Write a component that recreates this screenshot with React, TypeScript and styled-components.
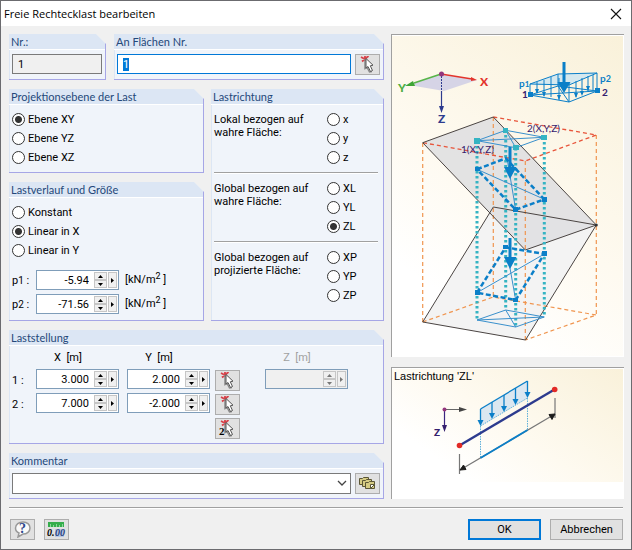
import React, { useState } from "react";
import styled, { createGlobalStyle } from "styled-components";

const GlobalStyle = createGlobalStyle`
  *, *::before, *::after { box-sizing: border-box; }
  body { margin: 0; background: #f0f0f0; }
  button, input, select { font: inherit; color: inherit; margin: 0; }
`;

const Dialog = styled.main`
  display: flex;
  flex-direction: column;
  min-height: 100vh;
  border: 1px solid #6b6b6f;
  background: #f0f0f0;
  color: #000;
  font: 11px/13px Roboto, "Open Sans", sans-serif;
`;

const TitleBar = styled.header`
  display: flex;
  align-items: center;
  justify-content: space-between;
  height: 25px;
  padding: 0 8px 0 3px;
  background: #fff;
`;

const Title = styled.h1`
  margin: 0;
  font: 11px/16px "Open Sans", sans-serif;
`;

const CloseButton = styled.button`
  display: flex;
  padding: 1px;
  border: 0;
  background: none;
`;

const Body = styled.div`
  display: grid;
  grid-template-columns: minmax(0, 375fr) minmax(0, 233fr);
  gap: 7px;
  padding: 8px 7px 0 8px;
`;

const Column = styled.div<{ $gap: number }>`
  display: flex;
  flex-direction: column;
  gap: ${(p) => p.$gap}px;
  min-width: 0;
`;

const Columns = styled.div<{ $cols: string; $gap: number }>`
  display: grid;
  grid-template-columns: ${(p) => p.$cols};
  gap: ${(p) => p.$gap}px;
`;

const GroupBox = styled.section`
  display: flex;
  flex-direction: column;
  border: 1px solid #a6a6e6;
  border-width: 0 1px 1px 0;
  background: #f0f4fa;
  clip-path: polygon(0 0, calc(100% - 10px) 0, 100% 10px, 100% 100%, 0 100%);
`;

const GroupTitle = styled.h2`
  height: 16px;
  margin: 0;
  padding-left: 2px;
  border-bottom: 1px solid #fff;
  background: #dce6f4;
  color: #24487a;
  font: 11px/15px Lato, sans-serif;
  white-space: nowrap;
`;

const GroupBody = styled.div<{ $pad: string }>`
  flex: 1;
  padding: ${(p) => p.$pad};
  border-left: 1px solid #dce6f4;
`;

const FieldRow = styled.div`
  display: flex;
  gap: 4px;
`;

const TextBox = styled.input<{ $active?: boolean }>`
  flex: 1;
  width: 100%;
  min-width: 0;
  height: 20px;
  padding: 0 5px;
  border: 1px solid ${(p) => (p.$active ? "#0078d7" : "#7a7a7a")};
  border-radius: 0;
  outline: 0;
  background: ${(p) => (p.$active ? "#fff" : "#f0f0f0")};
  &::selection { background: #0078d7; color: #fff; }
`;

const IconButton = styled.button`
  display: flex;
  align-items: center;
  justify-content: center;
  flex: none;
  width: 25px;
  height: 21px;
  padding: 0;
  border: 1px solid #adadad;
  background: #e1e1e1;
`;

const RadioLabel = styled.label`
  display: flex;
  align-items: center;
  gap: 3px;
  height: 19px;
  white-space: nowrap;
`;

const RadioInput = styled.input`
  appearance: none;
  width: 13px;
  height: 13px;
  border: 1px solid #333;
  border-radius: 50%;
  background: #fff;
  &:checked { background: radial-gradient(circle, #333 0 3px, #fff 4px); }
`;

const DirectionRow = styled.div`
  display: grid;
  grid-template-columns: minmax(0, 1fr) 51px;
`;

const DirectionText = styled.p`
  margin: 0;
  padding-top: 3px;
`;

const Rule = styled.hr<{ $margin: string }>`
  height: 2px;
  margin: ${(p) => p.$margin};
  border: 0;
  border-top: 1px solid #a0a0a0;
  border-bottom: 1px solid #fff;
`;

const LoadValues = styled.div`
  padding-top: 10px;
`;

const LoadRow = styled.div`
  display: flex;
  align-items: center;
  gap: 6px;
  margin-bottom: 4px;
`;

const LoadName = styled.span`
  flex: none;
  width: 18px;
  white-space: nowrap;
`;

const Small = styled.span`
  font-size: 10px;
`;

const Sup = styled.span`
  position: relative;
  top: -4px;
  font-size: 9px;
`;

const SpinFrame = styled.div<{ $off?: boolean }>`
  display: flex;
  flex: none;
  gap: 1px;
  width: 83px;
  height: 20px;
  padding: 1px;
  border: 1px solid #7f9db9;
  background: ${(p) => (p.$off ? "#f0f0f0" : "#fff")};
  color: ${(p) => (p.$off ? "#777" : "#000")};
`;

const SpinInput = styled.input`
  flex: 1;
  min-width: 0;
  padding: 0 4px 0 0;
  border: 0;
  outline: 0;
  background: none;
  text-align: right;
`;

const SpinPair = styled.div`
  display: grid;
  grid-template-rows: 8px 8px;
  width: 13px;
`;

const SpinButton = styled.button`
  display: flex;
  align-items: center;
  justify-content: center;
  min-width: 9px;
  padding: 0;
  border: 1px solid #c6c6c6;
  background: #f0f0f0;
`;

const PositionGrid = styled.div`
  display: grid;
  grid-template-columns: 24px 91px 88px 50px 83px;
  grid-template-rows: 15px repeat(3, 21px);
  row-gap: 3px;
`;

const AxisName = styled.span<{ $off?: boolean }>`
  width: 83px;
  padding-right: 19px;
  text-align: center;
  white-space: pre;
  color: ${(p) => (p.$off ? "#a0a0a0" : "#000")};
`;

const PointLabel = styled.span`
  grid-column: 1;
  padding-top: 5px;
`;

const PickCell = styled.div`
  grid-column: 4;
  padding-top: 1px;
`;

const ComboFrame = styled.div`
  position: relative;
  display: flex;
  flex: 1;
  min-width: 0;
  height: 21px;
  svg { position: absolute; right: 4px; top: 7px; pointer-events: none; }
`;

const Combo = styled.select`
  appearance: none;
  width: 100%;
  border: 1px solid #7a7a7a;
  border-radius: 0;
  background: #fff;
`;

const Picture = styled.figure<{ $grow?: boolean }>`
  margin: 0;
  border: 1px solid #a0a0a0;
  border-width: 1px 0 0 1px;
  background: #fff;
  padding: 1px 1px ${(p) => (p.$grow ? 17 : 1)}px 0;
  svg {
    display: block;
    width: 100%;
    height: auto;
    background: linear-gradient(35deg, #fff 20%, #fefaf0 50%, #f9f1da 100%);
  }
`;

const Footer = styled.footer`
  display: flex;
  align-items: center;
  padding: 10px 8px 9px 9px;
  gap: 9px;
`;

const FooterSpace = styled.div`
  flex: 1;
`;

const PushButton = styled.button<{ $primary?: boolean }>`
  width: 73px;
  height: 21px;
  padding: 0;
  border: ${(p) => (p.$primary ? "2px solid #0078d7" : "1px solid #adadad")};
  background: #e1e1e1;
`;

function PickIcon({ second }: { second?: boolean }) {
  return (
    <svg width="19" height="17" viewBox="0 0 19 17" aria-hidden="true">
      <path d="M3 1l7 4M10.500 0L4 5.500M7 0v5" stroke="#d8434b" strokeWidth="1.800" />
      <path d="M7 3v9.500l2-1 2.500 4.500 2.500-.5" fill="none" stroke="#8a8a8a" strokeWidth="1.500" />
      <path d="M8 2.500V12l2-1.500 2.500 5 2-1-2.200-4.700 2.700-.6z" fill="#fff" stroke="#555" />
      {second && (
        <text x="1" y="15" fontFamily="Liberation Serif, serif" fontSize="11" fontWeight="bold">2</text>
      )}
    </svg>
  );
}

function CardsIcon() {
  return (
    <svg width="17" height="13" viewBox="0 0 17 13" aria-hidden="true">
      <g fill="#d5cb83" stroke="#5b5636">
        <path d="M.5 7.500v-6h3l1-1h5v7z" />
        <path d="M3.500 9.500v-6h3l1-1h5v7z" />
        <path d="M6.500 11.500v-6h3l1-1h5v7z" />
      </g>
      <path d="M11.500 11.500v-4h4z" fill="#fff" stroke="#5b5636" />
    </svg>
  );
}

function HelpIcon() {
  return (
    <svg width="19" height="17" viewBox="0 0 19 17" aria-hidden="true">
      <path d="M10 1c4 0 7 2.500 7 6s-3 6-7 6l-5 3 1-4C3.500 11 2.500 9 2.500 7 2.500 3.500 6 1 10 1z" fill="#fafafa" stroke="#999" strokeWidth="1.500" />
      <text x="6" y="12" fontFamily="Liberation Serif, serif" fontSize="14" fontWeight="bold" fill="#2d478d">?</text>
    </svg>
  );
}

function UnitsIcon() {
  return (
    <svg width="19" height="17" viewBox="0 0 19 17" aria-hidden="true">
      <path d="M1 1h16v5H1z" fill="#35ad4c" />
      <path d="M3.500 3v3M6.500 4v2M9.500 3v3M12.500 4v2M15.500 3v3" stroke="#8ad99a" />
      <path d="M8 8h9v8H8z" fill="#b9c8e6" />
      <text x="0" y="15" fontFamily="Liberation Serif, serif" fontSize="10" fontStyle="italic" fontWeight="bold">0.</text>
      <text x="8" y="15" fontFamily="Liberation Serif, serif" fontSize="10" fontStyle="italic" fontWeight="bold" fill="#27427f">00</text>
    </svg>
  );
}

function Triangle({ dir }: { dir: "up" | "down" | "right" }) {
  const d = { up: "M0 3L2.500 0 5 3z", down: "M0 0h5L2.500 3z", right: "M1 0l3 2.500L1 5z" }[dir];
  return (
    <svg width="5" height={dir === "right" ? 5 : 3} fill="currentColor" aria-hidden="true">
      <path d={d} />
    </svg>
  );
}

function Spin({ label, value, off }: { label: string; value: string; off?: boolean }) {
  return (
    <SpinFrame $off={off}>
      <SpinInput aria-label={label} defaultValue={value} disabled={off} />
      <SpinPair>
        <SpinButton aria-label={`${label} erhöhen`} disabled={off}><Triangle dir="up" /></SpinButton>
        <SpinButton aria-label={`${label} verringern`} disabled={off}><Triangle dir="down" /></SpinButton>
      </SpinPair>
      <SpinButton aria-label={`${label} Optionen`} disabled={off}><Triangle dir="right" /></SpinButton>
    </SpinFrame>
  );
}

function Group({ id, title, pad, children }: { id: string; title: string; pad: string; children: React.ReactNode }) {
  return (
    <GroupBox aria-labelledby={id}>
      <GroupTitle id={id}>{title}</GroupTitle>
      <GroupBody $pad={pad}>{children}</GroupBody>
    </GroupBox>
  );
}

function Radios({ name, items, value, onPick }: { name: string; items: string[]; value: string; onPick: (v: string) => void }) {
  return (
    <div>
      {items.map((item) => (
        <RadioLabel key={item}>
          <RadioInput type="radio" name={name} checked={value === item} onChange={() => onPick(item)} />
          {item}
        </RadioLabel>
      ))}
    </div>
  );
}

const LABEL_FONT = "Lato, sans-serif";

function LoadDrawing() {
  const teal = "#35b4c3";
  const blue = "#0b7fc8";
  return (
    <svg viewBox="392 36 231 320" role="img" aria-label="Freie Rechtecklast">
      <path d="M441 74L409 85 444 91 477 80z" fill="#d6d4e6" />
      <path d="M441 74L414 83" stroke="#58b548" strokeWidth="1.500" />
      <path d="M405 86l8-5 2 5z" fill="#3fa535" />
      <path d="M441 74l31 5" stroke="#e3342c" strokeWidth="1.500" />
      <path d="M477 80l-6-3v4z" fill="#e3342c" />
      <path d="M441.500 76v15" stroke="#2d3b8e" strokeDasharray="2 1" />
      <path d="M441.500 91v16" stroke="#2d3b8e" strokeWidth="1.200" />
      <path d="M439 106h5l-2.500 7z" fill="#2d3b8e" />
      <circle cx="441.500" cy="74" r="2.500" fill="#93357c" />
      <g fontFamily={LABEL_FONT} fontSize="12" fontWeight="900">
        <text x="480" y="86" fill="#e3342c">X</text>
        <text x="398" y="92" fill="#4fae43">Y</text>
        <text x="438" y="123" fill="#2d3b8e">Z</text>
      </g>

      <g fill="none" stroke={blue} strokeWidth="1">
        <path d="M530 84L558 74 597 73 569 85z" fill="#d5e8ee" />
        <path d="M530 95L558 86 597 91 569 102z" />
        <path d="M530 84v11M558 74v12M597 73v18M530 95L597 91M558 86L569 102" />
        <path d="M537 82v11M544 80v16M551 77v20M559 78v22M569 82v20M576 81v16M582 78v16M588 76v15M593 75v15" />
      </g>
      <g fill={blue}>
        <path d="M535 89h4l-2 5zM542 92h4l-2 5zM557 95h4l-2 5zM580 91h4l-2 5zM586 86h4l-2 5zM574 93h4l-2 5z" />
        <path d="M528 92h5v5h-5zM595 88h5v5h-5z" />
        <path d="M562.500 62h3v20h5l-6.500 11-6.500-11h5z" />
      </g>
      <g fontFamily={LABEL_FONT} fontSize="10" fontWeight="bold">
        <text x="519" y="87" fill={blue}>p<tspan fontSize="8">1</tspan></text>
        <text x="600" y="82" fill={blue}>p<tspan fontSize="9">2</tspan></text>
        <text x="522" y="98" fill="#35206e">1</text>
        <text x="602" y="96" fill="#35206e">2</text>
      </g>

      <path d="M422.700 322L493.300 207 596.300 225 525.500 340z" fill="#f3f3f3" />
      <path d="M422.700 142.700L493.300 117 596.300 225 525.300 250z" fill="#dedee0" fillOpacity=".85" />
      <g fill="none" stroke="#f0954f" strokeWidth="1.200" strokeDasharray="4 3">
        <path d="M422.700 143v179M493.300 117v180M596.300 135v180M525.300 161v179" />
        <path d="M422.700 322l70.600-25 103 18-71 25" />
      </g>
      <path d="M493.300 117l103 18-71 26-102.600-18.300" fill="none" stroke="#e8553b" strokeWidth="1.300" strokeDasharray="4 3" />
      <g fill="none" stroke="#4a4442" strokeWidth="1">
        <path d="M422.700 142.700L493.300 117 596.300 225 525.300 250z" />
        <path d="M422.700 322L493.300 207 596.300 225 525.500 340z" />
      </g>
      <circle cx="596.300" cy="225" r="1.500" fill="#333" />
      <g stroke={teal} strokeWidth="3" strokeDasharray="2.500 2.500">
        <path d="M477 141v178M505.700 130v180M515.700 148v179M544.300 137v180" />
      </g>
      <g fill="none" stroke="#3a90cc" strokeWidth="1">
        <path d="M477 140.700L505.700 130.300 544.300 137.300 515.700 147.700zM477 140.700l67-3.400M505.700 130.300l10 17.400" />
        <path d="M477 320L505.700 310 544.300 317 515.700 327zM477 320l67-3M505.700 310l10 17" />
        <path d="M477 169.300L544.300 199.300M507 158L515.700 209.700M477 292.700L544.300 254M508 257L515.700 300" />
      </g>
      <g fill={teal}>
        <path d="M474 138h6v6h-6zM503 128h5v5h-5zM541 135h6v5h-6zM513 145h6v5h-6z" />
      </g>
      <g fill="none" stroke={blue} strokeWidth="2.500" strokeDasharray="5 2.500">
        <path d="M477 169.300L505.700 158.300 544.300 199.300 515.700 209.700z" />
        <path d="M477 292.700L505.700 247.300 544.300 254 515.700 300z" />
      </g>
      <g fill={blue}>
        <path d="M475 167h5v4h-5zM542 197h5v5h-5zM513 207h5v5h-5zM475 290h5v5h-5zM503 245h5v4h-5zM542 251h5v5h-5zM513 298h5v4h-5z" />
        <path d="M508.500 147h3v20h5l-6.500 12-6-12h4.500zM508.500 238h3v19h5l-6.500 12-6-12h4.500z" />
      </g>
      <g fontFamily={LABEL_FONT} fontSize="10" fill="#35206e">
        <text x="461" y="153">1(X,Y,Z)</text>
        <text x="527" y="132">2(X,Y,Z)</text>
      </g>
    </svg>
  );
}

function DirectionDrawing() {
  const blue = "#0b7fc8";
  const arrows = [[480.500, 409, 426], [492, 402, 419], [504, 395, 412], [515.500, 388, 405], [527.500, 381, 398]];
  return (
    <svg viewBox="392 369 231 113" role="img" aria-label="Lastrichtung ZL">
      <text x="394" y="380" fontFamily="Liberation Sans, sans-serif" fontSize="11">Lastrichtung 'ZL'</text>
      <path d="M445 409.500h15" stroke="#666" />
      <path d="M459 407l8 2.500-8 2.500z" fill="#444" />
      <path d="M444.500 410v17" stroke="#3a2480" strokeWidth="1.200" />
      <path d="M442 425h5l-2.500 7z" fill="#35206e" />
      <circle cx="444.500" cy="409.500" r="2" fill="#93357c" />
      <text x="434" y="436" fontFamily={LABEL_FONT} fontSize="10" fontWeight="900" fill="#35206e">Z</text>
      <path d="M480.500 409l47-28v17l-47 28z" fill="#dbe7f0" />
      <path d="M480.500 409l47-28" stroke={blue} strokeWidth="1.300" />
      <path d="M480.500 426l47-28M480.500 426v32M527.500 398v32" stroke="#5fb0da" strokeDasharray="1.500 1" fill="none" />
      {arrows.map(([x, top, tip]) => (
        <g key={x}>
          <path d={`M${x} ${top}V${tip - 4}`} stroke={blue} strokeWidth="1.300" />
          <path d={`M${x - 3} ${tip - 6}h6l-3 6z`} fill={blue} />
        </g>
      ))}
      <path d="M459.500 445.500l95-56" stroke="#2d3b8e" strokeWidth="2.400" />
      <circle cx="459.500" cy="445.500" r="2.800" fill="#e22b27" />
      <circle cx="554.700" cy="389.500" r="2.800" fill="#e22b27" />
      <path d="M459.500 454v20M555 398v20" stroke="#777" strokeWidth="1.200" />
      <path d="M460 470l95-56" stroke="#777" strokeWidth="1.200" />
      <path d="M480.500 458l47-28" stroke={blue} strokeWidth="1.800" />
      <path d="M460 470l3.500-5 2.500 4.500zM555 414l-6 .5 3 5z" fill="#1c1c1c" stroke="#1c1c1c" />
    </svg>
  );
}

export default function App() {
  const [plane, setPlane] = useState("Ebene XY");
  const [course, setCourse] = useState("Linear in X");
  const [direction, setDirection] = useState("ZL");
  const directions = [
    { first: "Lokal bezogen auf", second: "wahre Fläche:", items: ["x", "y", "z"] },
    { first: "Global bezogen auf", second: "wahre Fläche:", items: ["XL", "YL", "ZL"] },
    { first: "Global bezogen auf", second: "projizierte Fläche:", items: ["XP", "YP", "ZP"] },
  ];

  return (
    <>
      <GlobalStyle />
      <Dialog>
        <TitleBar>
          <Title>Freie Rechtecklast bearbeiten</Title>
          <CloseButton aria-label="Schließen">
            <svg width="12" height="12" viewBox="0 0 12 12" aria-hidden="true">
              <path d="M1 1l10 10M11 1L1 11" stroke="#111" strokeWidth="1.100" />
            </svg>
          </CloseButton>
        </TitleBar>

        <Body>
          <Column $gap={9}>
            <Columns $cols="minmax(0, 97fr) minmax(0, 270fr)" $gap={8}>
              <Group id="nr" title="Nr.:" pad="4px 3px 5px 2px">
                <FieldRow><TextBox aria-labelledby="nr" readOnly value="1" /></FieldRow>
              </Group>
              <Group id="faces" title="An Flächen Nr." pad="4px 3px 4px 2px">
                <FieldRow>
                  <TextBox
                    $active
                    aria-labelledby="faces"
                    defaultValue="1"
                    autoFocus
                    onFocus={(e) => e.currentTarget.select()}
                  />
                  <IconButton aria-label="Flächen wählen"><PickIcon /></IconButton>
                </FieldRow>
              </Group>
            </Columns>

            <Columns $cols="minmax(0, 195fr) minmax(0, 173fr)" $gap={7}>
              <Column $gap={9}>
                <Group id="plane" title="Projektionsebene der Last" pad="5px 2px">
                  <Radios name="plane" items={["Ebene XY", "Ebene YZ", "Ebene XZ"]} value={plane} onPick={setPlane} />
                </Group>
                <Group id="course" title="Lastverlauf und Größe" pad="5px 2px 2px">
                  <Radios name="course" items={["Konstant", "Linear in X", "Linear in Y"]} value={course} onPick={setCourse} />
                  <LoadValues>
                    {[["1", "-5.94"], ["2", "-71.56"]].map(([n, value]) => (
                      <LoadRow key={n}>
                        <LoadName>p<Small>{n}</Small> :</LoadName>
                        <Spin label={`p${n}`} value={value} />
                        <span>[kN/m<Sup>2</Sup> ]</span>
                      </LoadRow>
                    ))}
                  </LoadValues>
                </Group>
              </Column>
              <Group id="direction" title="Lastrichtung" pad="5px 5px 0 2px">
                {directions.map((d, i) => (
                  <React.Fragment key={d.items[0]}>
                    {i > 0 && <Rule $margin="5px 0" />}
                    <DirectionRow>
                      <DirectionText>{d.first}<br />{d.second}</DirectionText>
                      <Radios name="direction" items={d.items} value={direction} onPick={setDirection} />
                    </DirectionRow>
                  </React.Fragment>
                ))}
              </Group>
            </Columns>

            <Group id="position" title="Laststellung" pad="5px 2px 5px">
              <PositionGrid>
                <span />
                <AxisName>X  [m]</AxisName>
                <AxisName>Y  [m]</AxisName>
                <span />
                <AxisName $off>Z  [m]</AxisName>
                <PointLabel>1 :</PointLabel>
                <Spin label="X 1" value="3.000" />
                <Spin label="Y 1" value="2.000" />
                <PickCell><IconButton aria-label="Punkt 1 wählen"><PickIcon /></IconButton></PickCell>
                <Spin label="Z" value="" off />
                <PointLabel>2 :</PointLabel>
                <Spin label="X 2" value="7.000" />
                <Spin label="Y 2" value="-2.000" />
                <PickCell><IconButton aria-label="Punkt 2 wählen"><PickIcon /></IconButton></PickCell>
                <PickCell><IconButton aria-label="Zwei Punkte wählen"><PickIcon second /></IconButton></PickCell>
              </PositionGrid>
            </Group>

            <Group id="comment" title="Kommentar" pad="4px 3px 4px 2px">
              <FieldRow>
                <ComboFrame>
                  <Combo aria-labelledby="comment"><option value="" /></Combo>
                  <svg width="10" height="7" viewBox="0 0 10 7" aria-hidden="true">
                    <path d="M1 1l4 4 4-4" fill="none" stroke="#444" strokeWidth="1.300" />
                  </svg>
                </ComboFrame>
                <IconButton aria-label="Kommentar übernehmen"><CardsIcon /></IconButton>
              </FieldRow>
            </Group>
          </Column>

          <Column $gap={10}>
            <Picture><LoadDrawing /></Picture>
            <Picture $grow><DirectionDrawing /></Picture>
          </Column>
        </Body>

        <Rule $margin="8px 8px 0" />
        <Footer>
          <IconButton aria-label="Hilfe"><HelpIcon /></IconButton>
          <IconButton aria-label="Einheiten und Dezimalstellen"><UnitsIcon /></IconButton>
          <FooterSpace />
          <PushButton $primary>OK</PushButton>
          <PushButton>Abbrechen</PushButton>
        </Footer>
      </Dialog>
    </>
  );
}
